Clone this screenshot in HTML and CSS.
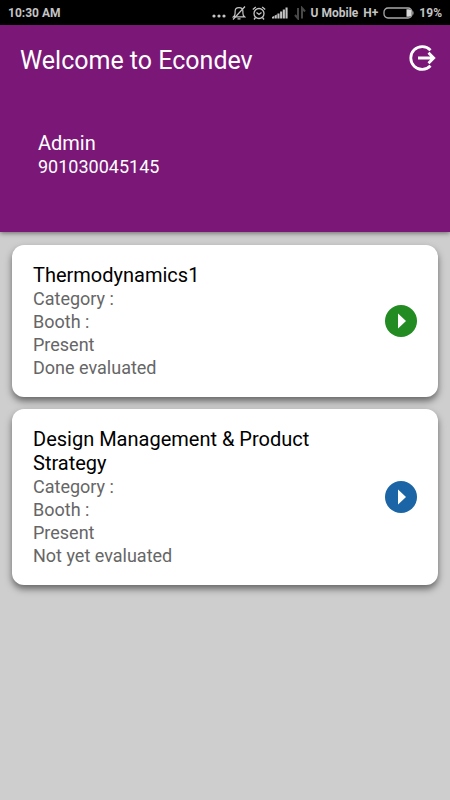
FILE: index.html
```html
<!DOCTYPE html>
<html lang="en">

<head>
  <meta charset="utf-8">
  <meta name="viewport" content="width=device-width, initial-scale=1">
  <title>Econdev</title>
  <link rel="stylesheet" href="styles.css">
</head>

<body>
  <div class="status-bar">
    <span class="time">10:30 AM</span>
    <div class="status-right">
      <div class="status-icons">
        <svg width="14" height="14" viewBox="0 0 14 14" fill="#c4c4c4">
          <circle cx="2" cy="10" r="1.6"/>
          <circle cx="7" cy="10" r="1.6"/>
          <circle cx="12" cy="10" r="1.6"/>
        </svg>
        <svg width="14" height="14" viewBox="0 0 14 14" fill="none" stroke="#c4c4c4" stroke-width="1.2">
          <path d="M1.5 10.8h11c-1.2-1-1.6-2-1.6-3.6V5.400C10.900 3 9.300 1.600 7 1.600S3.100 3 3.100 5.400v1.800c0 1.600-.4 2.600-1.600 3.600z"/>
          <path d="M5.500 12.800h3M13 .5L1 13.500"/>
        </svg>
        <svg width="14" height="14" viewBox="0 0 14 14" fill="none" stroke="#c4c4c4" stroke-width="1.3">
          <circle cx="7" cy="7.500" r="5"/>
          <path d="M4.500 6.500L7 8.500l2.500-2M.8 3.500l3-2.500M13.200 3.500l-3-2.500M3.500 11.500l-1.500 2M10.500 11.500l1.500 2"/>
        </svg>
        <svg width="16" height="14" viewBox="0 0 16 14" fill="#c4c4c4">
          <path d="M0 12.500v-1.500l2-1v2.500zM2.500 12.500V9.800l2.300-1.300v4zM5.400 12.500V7.500h2.100v5zM8.100 12.500V5.500h2.100v7zM10.800 12.500V3.500h2.100v9zM13.500 12.500v-11h2.100v11z"/>
        </svg>
        <svg width="12" height="14" viewBox="0 0 12 14" fill="none" stroke="#484848" stroke-width="2">
          <path d="M4 2v10.500L1 9M8 12.500V2l3 3.500"/>
        </svg>
      </div>
      <span class="carrier">U Mobile</span>
      <span>H+</span>
      <svg width="31" height="12" viewBox="0 0 31 12">
        <rect x="1" y="1" width="28" height="10" rx="4" fill="none" stroke="#a8a8a8" stroke-width="1.3"/>
        <path d="M23.500 2.200h2.500q2.400 0 2.400 2v3.600q0 2-2.400 2h-2.500z" fill="#d8d8d8"/>
        <path d="M30 4.500v3" stroke="#a8a8a8"/>
      </svg>
      <span>19%</span>
    </div>
  </div>

  <header>
    <div class="title-row">
      <h1>Welcome to Econdev</h1>
      <button class="logout" aria-label="Log out">
        <svg width="28" height="28" viewBox="0 0 28 28" fill="none" stroke="#fff" stroke-width="2.800">
          <path d="M22.500 6.200A11.400 11.400 0 1 0 22.500 21.800"/>
          <path d="M10 14h15M20.500 8.800l5.200 5.200-5.200 5.200"/>
        </svg>
      </button>
    </div>
    <div class="user">
      <p class="user-name">Admin</p>
      <p class="user-id">901030045145</p>
    </div>
  </header>

  <main>
    <article class="card">
      <div class="card-text">
        <h2>Thermodynamics1</h2>
        <p>Category :</p>
        <p>Booth :</p>
        <p>Present</p>
        <p>Done evaluated</p>
      </div>
      <button class="go done" aria-label="Open Thermodynamics1">
        <svg width="32" height="32" viewBox="0 0 32 32" fill="#fff"><path d="M13 8.500v15l8-7.500z"/></svg>
      </button>
    </article>

    <article class="card">
      <div class="card-text">
        <h2>Design Management &amp; Product Strategy</h2>
        <p>Category :</p>
        <p>Booth :</p>
        <p>Present</p>
        <p>Not yet evaluated</p>
      </div>
      <button class="go" aria-label="Open Design Management &amp; Product Strategy">
        <svg width="32" height="32" viewBox="0 0 32 32" fill="#fff"><path d="M13 8.500v15l8-7.500z"/></svg>
      </button>
    </article>
  </main>
</body>

</html>
```
FILE: styles.css
```css
* {
  box-sizing: border-box;
}

body {
  margin: 0;
  min-height: 100vh;
  background-color: #cecece;
  font-family: Roboto, sans-serif;
}

h1,
h2,
p {
  margin: 0;
  font-weight: 400;
}

button {
  border: none;
  padding: 0;
  cursor: pointer;
}

svg {
  display: block;
}

/* status bar */
.status-bar {
  display: flex;
  align-items: center;
  justify-content: space-between;
  height: 25px;
  padding: 0 8px;
  background-color: #000;
  color: #c4c4c4;
  font-size: 12px;
  font-weight: 700;
}

.status-right {
  display: flex;
  align-items: center;
  gap: 5px;
}

.status-icons {
  display: flex;
  gap: 6px;
}

/* header */
header {
  padding: 17px 14px 54px 20px;
  background-color: #7b1777;
  color: #fff;
  box-shadow: 0 1px 5px rgba(0, 0, 0, 0.5);
}

.title-row {
  display: flex;
  align-items: flex-start;
  justify-content: space-between;
}

h1 {
  font-size: 25px;
  line-height: 38px;
}

.logout {
  background: none;
  margin-top: 2px;
}

.user {
  padding: 52px 0 0 18px;
}

.user-name {
  font-size: 20px;
  line-height: 23px;
}

.user-id {
  font-size: 18px;
  line-height: 23px;
}

/* project cards */
main {
  display: flex;
  flex-direction: column;
  gap: 12px;
  padding: 13px 12px;
}

.card {
  display: flex;
  align-items: center;
  justify-content: space-between;
  gap: 20px;
  padding: 18px 21px;
  background-color: #fff;
  border-radius: 12px;
  box-shadow: 0 4px 7px rgba(0, 0, 0, 0.5);
}

.card-text {
  max-width: 320px;
}

.card h2 {
  color: #000;
  font-size: 20px;
  line-height: 24px;
}

.card p {
  color: #666;
  font-size: 18px;
  line-height: 23px;
}

.go {
  flex: none;
  border-radius: 50%;
  background-color: #1b65a6;
}

.go.done {
  background-color: #228b22;
}
```
